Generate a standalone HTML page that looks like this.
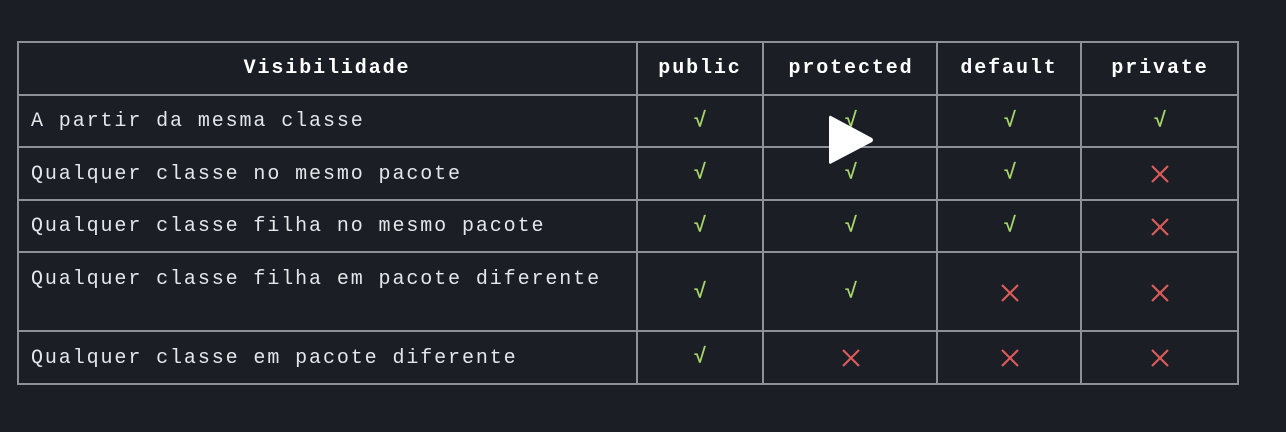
<!DOCTYPE html><html><head><style>
body{margin:0;width:1286px;height:432px;background:#1b1e25;overflow:hidden;position:relative;font-family:"Liberation Mono",monospace;color:#e4e6ea}
.h,.v{position:absolute;background:#8d9096}
.h{height:2px;left:17px;width:1222px}
.v{width:2px;top:42px;height:343px}
.t{position:absolute;font-size:20px;letter-spacing:1.9px;white-space:nowrap;line-height:20px}
.b{font-weight:bold;color:#fff;transform:translateX(-50%)}
.c{position:absolute;font-size:21px;font-weight:bold;transform:translate(-50%,-50%);color:#a6d46a}
.x{position:absolute;width:20px;height:20px;transform:translate(-50%,-50%)}
</style></head><body>
<svg width="0" height="0" style="position:absolute"><defs><symbol id="x" viewBox="0 0 20 20"><path d="M2 2L18 18M18 2L2 18" stroke="#d95b5b" stroke-width="2.2"/></symbol></defs></svg>
<div class="h" style="top:41px"></div><div class="h" style="top:94px"></div><div class="h" style="top:146px"></div><div class="h" style="top:199px"></div><div class="h" style="top:251px"></div><div class="h" style="top:330px"></div><div class="h" style="top:383px"></div>
<div class="v" style="left:17px;top:41px"></div><div class="v" style="left:636px;top:41px"></div><div class="v" style="left:762px;top:41px"></div><div class="v" style="left:936px;top:41px"></div><div class="v" style="left:1080px;top:41px"></div><div class="v" style="left:1237px;top:41px"></div>
<div class="t b" style="left:327px;top:59px">Visibilidade</div>
<div class="t b" style="left:700px;top:59px">public</div>
<div class="t b" style="left:851px;top:59px">protected</div>
<div class="t b" style="left:1009px;top:59px">default</div>
<div class="t b" style="left:1160px;top:59px">private</div>
<div class="t" style="left:31px;top:112px">A partir da mesma classe</div>
<div class="t" style="left:31px;top:165px">Qualquer classe no mesmo pacote</div>
<div class="t" style="left:31px;top:217px">Qualquer classe filha no mesmo pacote</div>
<div class="t" style="left:31px;top:270px">Qualquer classe filha em pacote diferente</div>
<div class="t" style="left:31px;top:349px">Qualquer classe em pacote diferente</div>
<div class="c" style="left:700px;top:122px">√</div><div class="c" style="left:851px;top:122px">√</div><div class="c" style="left:1010px;top:122px">√</div><div class="c" style="left:1160px;top:122px">√</div>
<div class="c" style="left:700px;top:174px">√</div><div class="c" style="left:851px;top:174px">√</div><div class="c" style="left:1010px;top:174px">√</div><svg class="x" style="left:1160px;top:174px"><use href="#x"/></svg>
<div class="c" style="left:700px;top:227px">√</div><div class="c" style="left:851px;top:227px">√</div><div class="c" style="left:1010px;top:227px">√</div><svg class="x" style="left:1160px;top:227px"><use href="#x"/></svg>
<div class="c" style="left:700px;top:293px">√</div><div class="c" style="left:851px;top:293px">√</div><svg class="x" style="left:1010px;top:293px"><use href="#x"/></svg><svg class="x" style="left:1160px;top:293px"><use href="#x"/></svg>
<div class="c" style="left:700px;top:358px">√</div><svg class="x" style="left:851px;top:358px"><use href="#x"/></svg><svg class="x" style="left:1010px;top:358px"><use href="#x"/></svg><svg class="x" style="left:1160px;top:358px"><use href="#x"/></svg>
<svg style="position:absolute;left:826px;top:112px" width="50" height="56"><path d="M5 4 Q3 3 3 6 L3 50 Q3 53 6 51 L46 30 Q48 28 46 26 Z" fill="#fff"/></svg>
</body></html>
